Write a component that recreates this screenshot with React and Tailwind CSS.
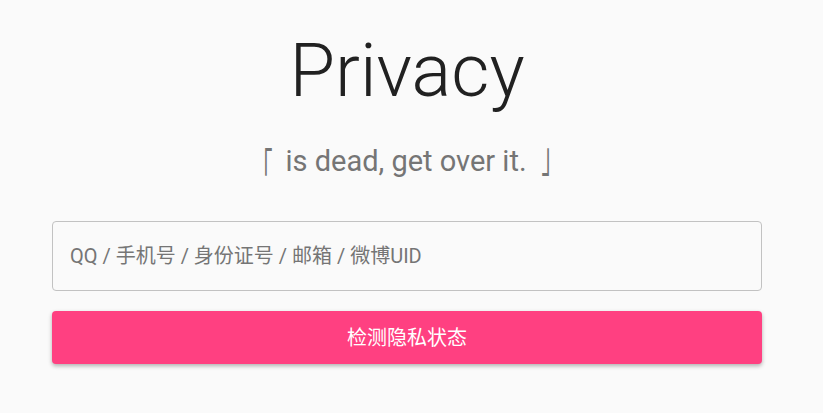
export default function App() {
  return (
    <div className="min-h-screen bg-[#fafafa] font-['Roboto','Noto_Sans_CJK_SC',sans-serif]">
      <div className="w-[814px] px-[52px] pt-[34px]">
        <h1 className="text-center text-[74px] leading-none font-light text-[#212121]">
          Privacy
        </h1>
        <p className="mt-[39px] text-center text-[29px] leading-none text-[#757575]">
          <span className="inline-block -my-[12px] -mr-[5px] translate-y-[13px] scale-x-[0.5] text-[42px] leading-none">「</span> is dead, get over it.{" "}
          <span className="inline-block -my-[12px] -ml-[3px] translate-y-[1px] scale-x-[0.5] text-[42px] leading-none">」</span>
        </p>
        <div className="mt-[45px] flex flex-col gap-[20px]">
          <input
            type="text"
            placeholder="QQ / 手机号 / 身份证号 / 邮箱 / 微博UID"
            className="h-[70px] w-full rounded-[4px] border border-[#c2c2c2] bg-[#fafafa] px-[17px] text-[20px] text-[#212121] placeholder-[#757575] outline-none"
          />
          <button className="h-[53px] w-full rounded-[4px] bg-[#ff4081] text-[20px] text-white shadow-[0_2px_4px_rgba(0,0,0,0.3)]">
            检测隐私状态
          </button>
        </div>
      </div>
    </div>
  );
}
